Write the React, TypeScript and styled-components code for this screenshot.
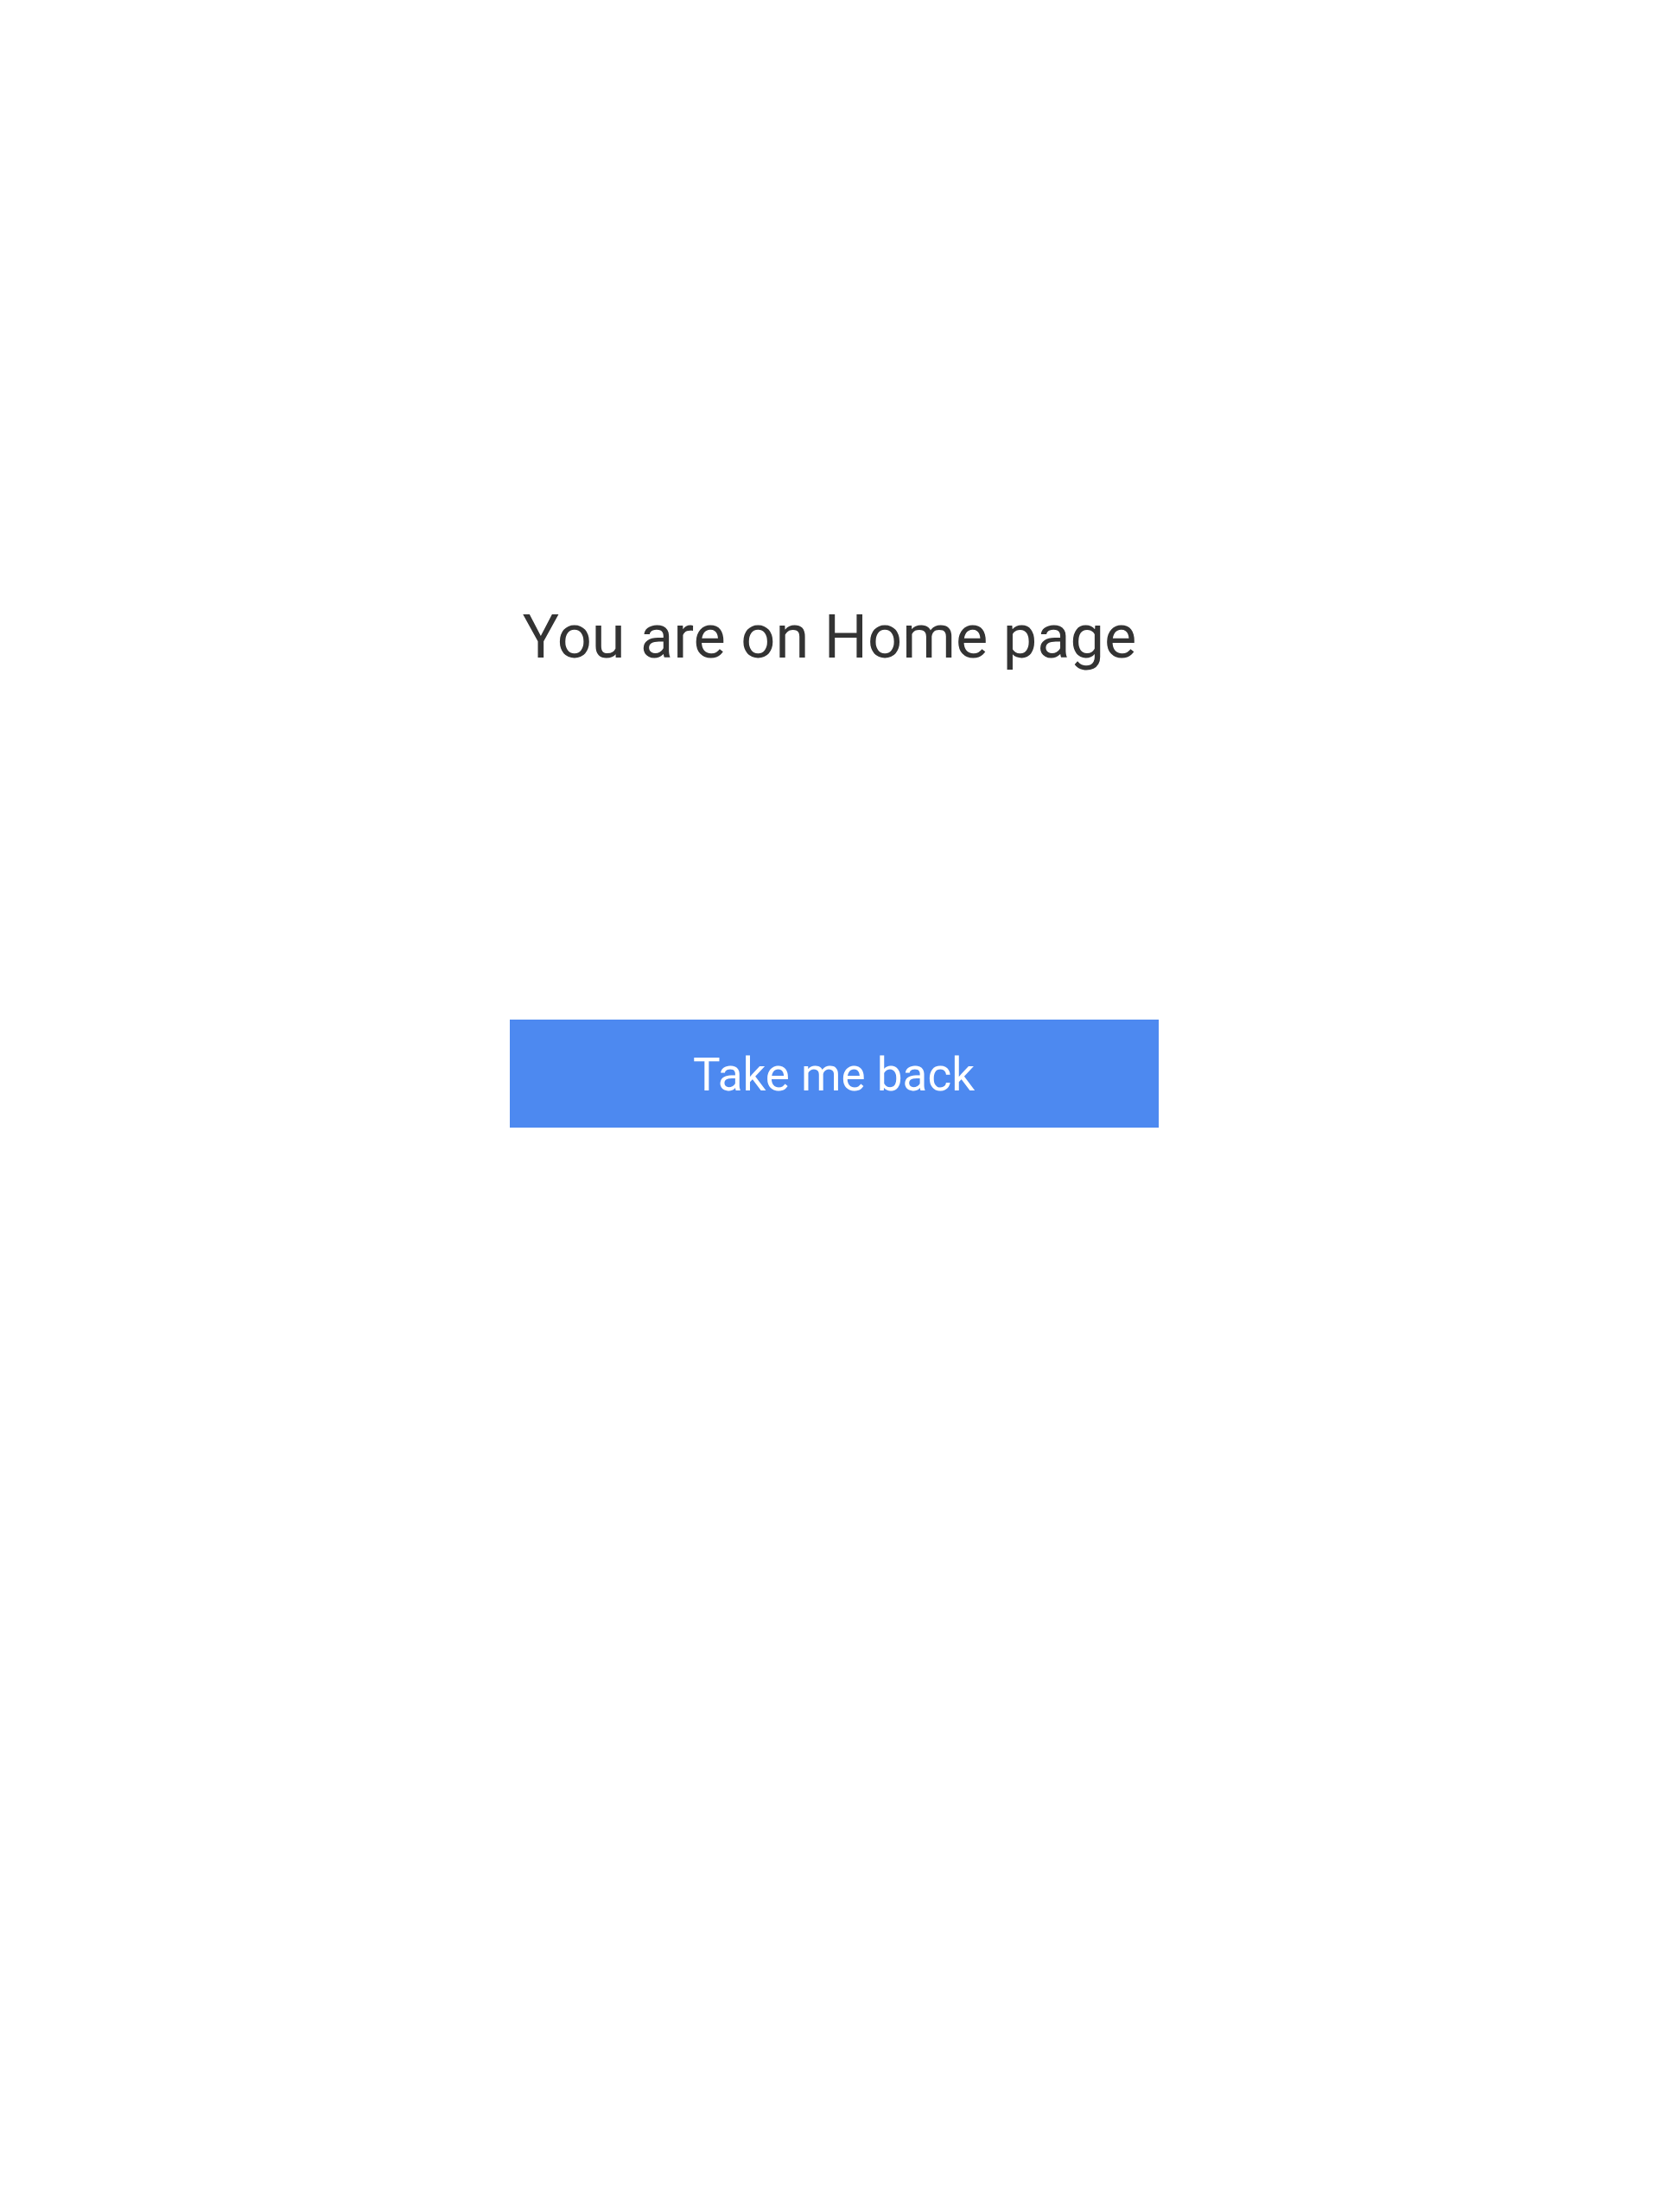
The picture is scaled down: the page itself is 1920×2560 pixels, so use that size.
import styled, { createGlobalStyle } from "styled-components"

const GlobalStyle = createGlobalStyle`
  html, body {
    margin: 0;
    padding: 0;
    background: #ffffff;
  }
  body {
    font-family: Roboto, "Liberation Sans", sans-serif;
  }
`

export default function App() {
    return (
        <>
            <GlobalStyle />
            <Page>
                <Title>You are on Home page</Title>
                <BackButton type="button">Take me back</BackButton>
            </Page>
        </>
    )
}

const Page = styled.main`
    min-height: 2560px;
    box-sizing: border-box;
    display: flex;
    flex-direction: column;
    align-items: center;
    padding-top: 696px;
`
const Title = styled.h1`
    margin: 0;
    font-family: Roboto, "Liberation Sans", sans-serif;
    font-size: 70.4px;
    font-weight: 400;
    line-height: normal;
    color: #333333;
`
const BackButton = styled.button`
    margin-top: 402px;
    margin-left: 10px;
    width: 751px;
    height: 125px;
    padding: 3px 0 0;
    border: none;
    border-radius: 0;
    background-color: #4d89f0;
    color: #ffffff;
    font-family: Roboto, "Liberation Sans", sans-serif;
    font-size: 53px;
    font-weight: 400;
    cursor: pointer;
`
